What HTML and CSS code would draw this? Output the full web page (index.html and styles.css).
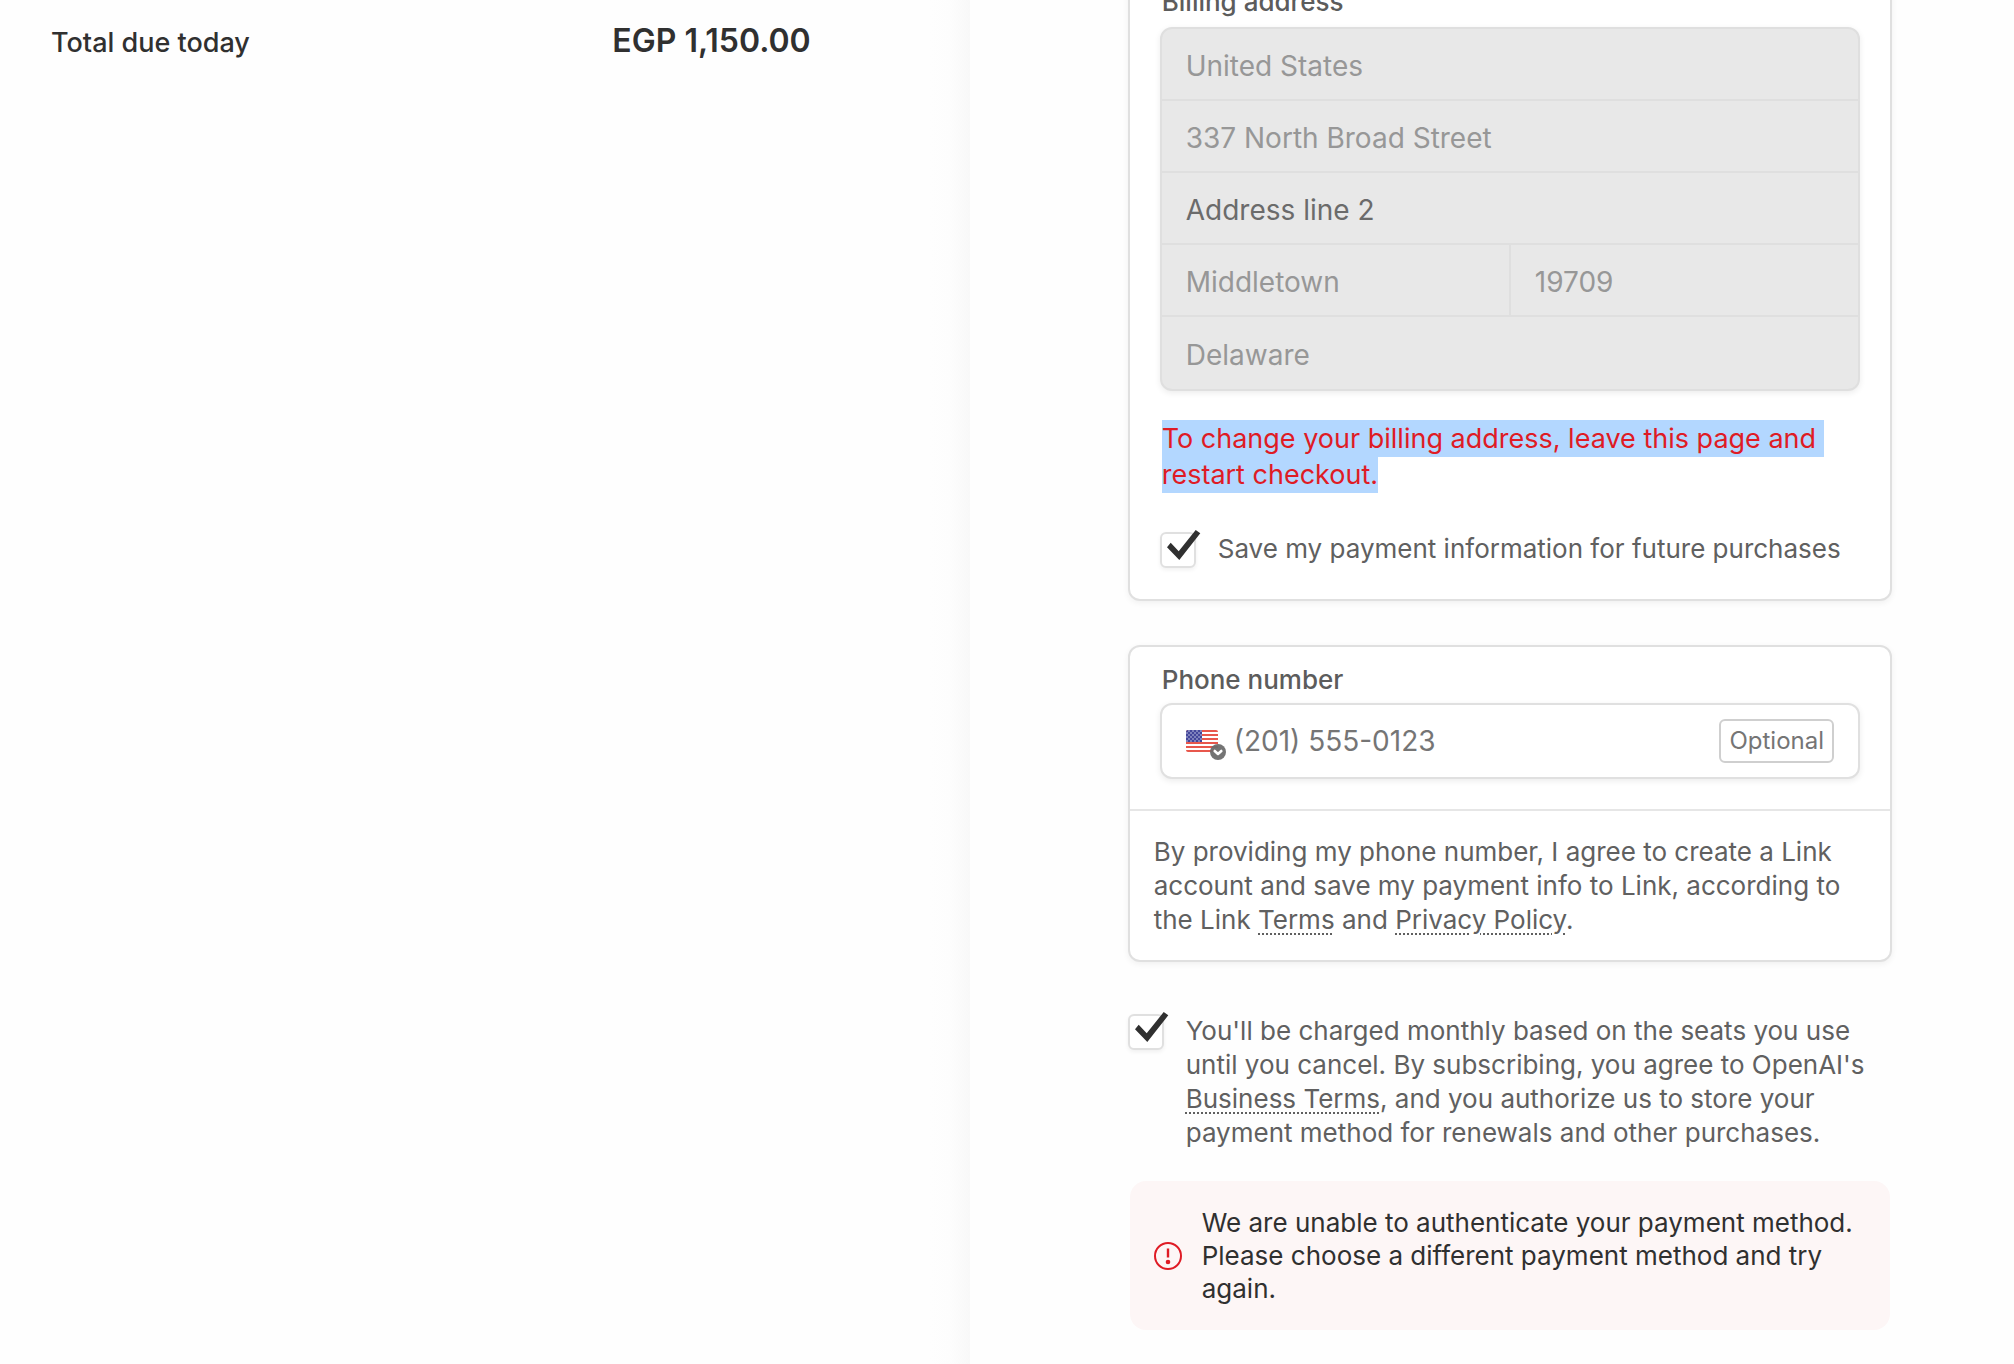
FILE: index.html
```html
<!DOCTYPE html>
<html lang="en">
<head>
    <meta charset="UTF-8">
    <meta name="viewport" content="width=device-width, initial-scale=1.0">
    <title>Checkout</title>
    <link rel="stylesheet" href="styles.css">
</head>
<body>
    <div class="checkout">
        <aside class="summary">
            <div class="total">
                <span class="total-label">Total due today</span>
                <span class="total-amount">EGP 1,150.00</span>
            </div>
        </aside>

        <main class="payment">
            <form>
                <section class="card billing">
                    <label class="field-label" for="country">Billing address</label>
                    <div class="address">
                        <select id="country" aria-label="Country" disabled>
                            <option>United States</option>
                        </select>
                        <input type="text" aria-label="Address line 1" value="337 North Broad Street" disabled>
                        <input type="text" aria-label="Address line 2" placeholder="Address line 2" disabled>
                        <div class="address-row">
                            <input type="text" aria-label="City" value="Middletown" disabled>
                            <input type="text" aria-label="ZIP" value="19709" disabled>
                        </div>
                        <select class="state" aria-label="State" disabled>
                            <option>Delaware</option>
                        </select>
                    </div>
                    <p class="notice"><mark>To change your billing address, leave this page and restart checkout.</mark></p>
                    <div class="check-row">
                        <span class="check">
                            <input type="checkbox" id="savePayment" checked>
                            <svg class="tick" viewBox="0 0 36 36"><path d="M7 15.3 10.7 10.7 18.7 19.3 35.7-2 40.3 1.3 19.3 28z"/></svg>
                        </span>
                        <label for="savePayment">Save my payment information for future purchases</label>
                    </div>
                </section>

                <section class="card phone">
                    <div class="phone-body">
                        <label class="field-label" for="phone">Phone number</label>
                        <div class="phone-field">
                            <button type="button" class="flag-btn" aria-label="Select country code">
                                <svg width="40" height="38" viewBox="0 -6 40 38">
                                    <defs>
                                        <clipPath id="flagClip"><rect y="2" width="32" height="22" rx="2"/></clipPath>
                                        <pattern id="stars" width="4" height="4" patternUnits="userSpaceOnUse">
                                            <circle cx="1" cy="1" r=".8" fill="#c9cae6"/>
                                            <circle cx="3" cy="3" r=".8" fill="#c9cae6"/>
                                        </pattern>
                                    </defs>
                                    <g clip-path="url(#flagClip)">
                                        <path fill="#fff" d="M0 2h32v22H0z"/>
                                        <path stroke="#e8574c" stroke-width="2" d="M0 3h32M0 7h32M0 11h32M0 15h32M0 19h32M0 23h32"/>
                                        <path fill="#44479b" d="M0 2h16v12H0z"/>
                                        <path fill="url(#stars)" d="M0 2h16v12H0z"/>
                                    </g>
                                    <circle cx="32" cy="24" r="8" fill="#6d6d6d" fill-opacity=".95"/>
                                    <path fill="none" stroke="#fff" stroke-width="2.6" stroke-linecap="round" stroke-linejoin="round" d="m28.7 23 3.3 3 3.3-3"/>
                                </svg>
                            </button>
                            <input type="tel" id="phone" placeholder="(201) 555-0123">
                            <span class="optional">Optional</span>
                        </div>
                    </div>
                    <p class="disclosure">By providing my phone number, I agree to create a Link account and save my payment info to Link, according to the Link <a href="#">Terms</a> and <a href="#">Privacy Policy</a>.</p>
                </section>

                <div class="check-row terms">
                    <span class="check">
                        <input type="checkbox" id="agree" checked>
                        <svg class="tick" viewBox="0 0 36 36"><path d="M7 15.3 10.7 10.7 18.7 19.3 35.7-2 40.3 1.3 19.3 28z"/></svg>
                    </span>
                    <label for="agree">You'll be charged monthly based on the seats you use until you cancel. By subscribing, you agree to OpenAI's <a href="#">Business Terms</a>, and you authorize us to store your payment method for renewals and other purchases.</label>
                </div>

                <div class="error" role="alert">
                    <svg class="error-icon" width="28" height="28" viewBox="0 0 28 28">
                        <circle cx="14" cy="14" r="13" fill="none" stroke="#df1b25" stroke-width="2"/>
                        <path stroke="#df1b25" stroke-width="2.4" d="M14 6.5v9"/>
                        <circle cx="14" cy="20" r="2.3" fill="#df1b25"/>
                    </svg>
                    <p>We are unable to authenticate your payment method. Please choose a different payment method and try again.</p>
                </div>
            </form>
        </main>
    </div>
</body>
</html>
```

FILE: styles.css
```css
* { margin: 0; padding: 0; box-sizing: border-box; }
body {
    background: #fefefe;
    color: #303030;
    font-family: Inter, "Liberation Sans", sans-serif;
    font-size: 26px;
    line-height: 34px;
}
input, select, button { font: inherit; color: inherit; border: none; background: none; outline: none; appearance: none; }

.checkout {
    display: grid;
    grid-template-columns: minmax(0, 13fr) minmax(0, 14fr);
    min-height: 100vh;
    overflow: hidden;
}

/* order summary */
.summary {
    padding: 24px 159px 24px 51px;
    background: linear-gradient(to left, #f8f8f8, #fdfdfd 20px, #fefefe 40px) no-repeat;
}
.total { display: flex; justify-content: space-between; align-items: baseline; }
.total-label { font-size: 27px; font-weight: 500; }
.total-amount { font-size: 32px; font-weight: 600; }

/* the first card starts above the fold */
.payment { padding: 0 122px 32px 158px; margin-top: -33px; }
.card {
    border: 2px solid #e0e0e0;
    border-radius: 12px;
    background: #fff;
    box-shadow: 0 2px 6px rgba(0, 0, 0, 0.06);
}
.field-label { display: block; padding-left: 2px; font-weight: 500; color: #5c5c5c; }

.billing { padding: 16px 30px 31px; }
.address {
    display: flex;
    flex-direction: column;
    gap: 2px;
    margin-top: 8px;
    border: 2px solid #dfdfdf;
    border-radius: 12px;
    background: #dfdfdf;
    box-shadow: 0 2px 6px rgba(0, 0, 0, 0.08);
    overflow: hidden;
}
.address input, .address select {
    width: 100%;
    height: 70px;
    padding: 3px 24px 0;
    background: #e8e8e8;
    color: #979797;
    font-size: 28px;
    opacity: 1;
}
.address .state { height: 72px; }
.address input::placeholder { color: #6b6b6b; }
.address-row { display: flex; gap: 2px; }

.notice { margin: 30px 0 39px; padding-left: 2px; font-size: 27px; line-height: 36px; }
.notice mark { padding: 2px 0; background: #b3d7ff; color: #df1b25; white-space: break-spaces; }

.check-row { display: flex; align-items: flex-start; gap: 22px; color: #606060; }
.check { position: relative; flex: none; width: 36px; height: 36px; }
.check input {
    display: block;
    width: 36px;
    height: 36px;
    border: 2px solid #e0e0e0;
    border-radius: 6px;
    background: #fff;
    box-shadow: 0 2px 4px rgba(0, 0, 0, 0.06);
}
.tick { position: absolute; inset: 0; overflow: visible; fill: #303030; pointer-events: none; display: none; }
.check input:checked + .tick { display: block; }

.phone { margin-top: 44px; }
.phone-body { padding: 16px 30px 30px; border-bottom: 2px solid #e6e6e6; }
.phone-field {
    display: flex;
    align-items: center;
    height: 76px;
    margin-top: 6px;
    padding: 0 24px;
    border: 2px solid #e0e0e0;
    border-radius: 12px;
    background: #fff;
    box-shadow: 0 2px 6px rgba(0, 0, 0, 0.08);
}
.flag-btn { display: flex; cursor: pointer; }
.phone-field input { flex: 1; min-width: 0; height: 100%; padding-left: 8px; font-size: 28px; }
.phone-field input::placeholder { color: #757575; }
.optional {
    padding: 3px 8px;
    border: 2px solid #cfcfcf;
    border-radius: 6px;
    color: #757575;
    font-size: 24px;
}
.disclosure { padding: 24px 24px 23px; color: #606060; }
a { color: inherit; text-decoration: underline dotted 2px; text-underline-offset: 4px; }

.terms { margin-top: 52px; }

.error {
    display: flex;
    align-items: center;
    gap: 20px;
    margin: 31px 2px 0;
    padding: 25px 24px;
    border-radius: 16px;
    background: #fdf6f6;
    line-height: 33px;
}
.error-icon { flex: none; }
```
